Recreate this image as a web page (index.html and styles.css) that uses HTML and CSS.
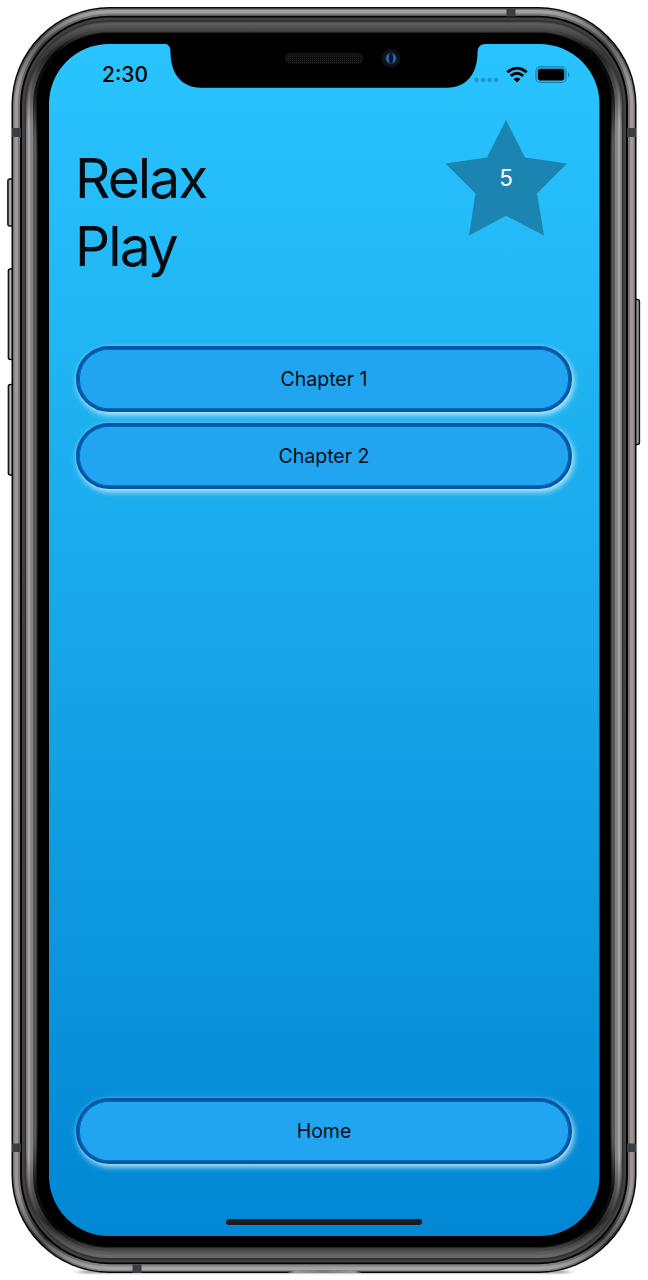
FILE: index.html
```
<!DOCTYPE html>
<html lang="en">
<head>
<meta charset="utf-8">
<title>Relax Play</title>
<link rel="stylesheet" href="styles.css">
</head>
<body>
<div class="device">
  <svg class="frame" viewBox="0 0 648 1280" aria-hidden="true">
    <defs>
      <linearGradient id="rim" x1="0" y1="0" x2="0" y2="1"><stop offset="0" stop-color="#777"/><stop offset=".025" stop-color="#393737"/><stop offset=".06" stop-color="#797474"/><stop offset=".94" stop-color="#777373"/><stop offset=".977" stop-color="#282727"/><stop offset="1" stop-color="#888"/></linearGradient>
      <linearGradient id="rimLight" x1="0" y1="0" x2="0" y2="1"><stop offset="0" stop-color="#aaa6a6"/><stop offset=".025" stop-color="#625f5f"/><stop offset=".06" stop-color="#a09b9b"/><stop offset=".94" stop-color="#9b9696"/><stop offset=".977" stop-color="#555"/><stop offset="1" stop-color="#aaa"/></linearGradient>
      <linearGradient id="p1" x1="0" y1="0" x2="0" y2="1"><stop offset="0" stop-color="#505050"/><stop offset=".04" stop-color="#383838"/><stop offset=".09" stop-color="#777"/><stop offset=".91" stop-color="#777"/><stop offset=".96" stop-color="#383838"/><stop offset="1" stop-color="#656565"/></linearGradient>
      <linearGradient id="p2" x1="0" y1="0" x2="0" y2="1"><stop offset="0" stop-color="#5d5d5d"/><stop offset=".03" stop-color="#2c2c2c"/><stop offset=".08" stop-color="#a5a3a3"/><stop offset=".92" stop-color="#a5a3a3"/><stop offset=".97" stop-color="#2c2c2c"/><stop offset="1" stop-color="#6b6b6b"/></linearGradient>
      <linearGradient id="p3" x1="0" y1="0" x2="0" y2="1"><stop offset="0" stop-color="#555"/><stop offset=".025" stop-color="#222"/><stop offset=".08" stop-color="#858383"/><stop offset=".92" stop-color="#858383"/><stop offset=".975" stop-color="#222"/><stop offset="1" stop-color="#5d5d5d"/></linearGradient>
      <linearGradient id="p4" x1="0" y1="0" x2="0" y2="1"><stop offset="0" stop-color="#4c4c4c"/><stop offset=".02" stop-color="#050505"/><stop offset=".05" stop-color="#111"/><stop offset=".09" stop-color="#5a5858"/><stop offset=".91" stop-color="#5a5858"/><stop offset=".95" stop-color="#111"/><stop offset=".98" stop-color="#050505"/><stop offset="1" stop-color="#4c4c4c"/></linearGradient>
      <linearGradient id="p5" x1="0" y1="0" x2="0" y2="1"><stop offset="0" stop-color="#292929"/><stop offset=".01" stop-color="#000"/><stop offset=".07" stop-color="#000"/><stop offset=".1" stop-color="#292929"/><stop offset=".9" stop-color="#292929"/><stop offset=".93" stop-color="#000"/><stop offset=".99" stop-color="#000"/><stop offset="1" stop-color="#292929"/></linearGradient>
      <linearGradient id="keyL" x1="0" x2="1"><stop offset="0" stop-color="#333"/><stop offset=".35" stop-color="#bbb"/><stop offset="1" stop-color="#777"/></linearGradient>
      <linearGradient id="blue" x1="0" y1="0" x2="0" y2="1"><stop offset="0" stop-color="#29c4ff"/><stop offset=".5" stop-color="#17a6e8"/><stop offset="1" stop-color="#0187d3"/></linearGradient>
      <linearGradient id="foot" x1="0" x2="1"><stop offset="0" stop-color="#333"/><stop offset=".1" stop-color="#999"/><stop offset=".5" stop-color="#777"/><stop offset=".9" stop-color="#999"/><stop offset="1" stop-color="#333"/></linearGradient>
      <radialGradient id="lens"><stop offset="0" stop-color="#081130"/><stop offset=".25" stop-color="#10234d"/><stop offset=".6" stop-color="#3478bd"/><stop offset="1" stop-color="#0f2340"/></radialGradient>
      <pattern id="mesh" width="2" height="2" patternUnits="userSpaceOnUse"><rect width="2" height="2" fill="#101010"/><rect width="1" height="1" fill="#202020"/></pattern>
      <filter id="soft" x="-10%" width="120%" y="-300%" height="700%"><feGaussianBlur stdDeviation="5 .8"/></filter>
    </defs>
    <rect x="80" y="1271" width="488" height="2" fill="#777" filter="url(#soft)"/>
    <!-- side keys -->
    <g fill="url(#keyL)" stroke="#111" stroke-width="1.3">
      <rect x="7.8" y="179" width="6" height="47" rx="2"/>
      <rect x="8.3" y="269" width="6" height="90.500" rx="2"/>
      <rect x="8.3" y="384.500" width="6" height="90.500" rx="2"/>
      <rect x="633" y="299.500" width="6.500" height="145" rx="2"/>
    </g>
    <!-- body, from the outer rim to the glass -->
    <rect x="11.500" y="7" width="625" height="1266" rx="98" fill="#080808"/>
    <rect x="13" y="8.500" width="622" height="1263" rx="96.500" fill="url(#rim)"/>
    <rect x="14.500" y="10" width="619" height="1260" rx="95" fill="url(#rimLight)"/>
    <rect x="18" y="13.500" width="612" height="1253" rx="91.500" fill="url(#rim)"/>
    <rect x="20" y="15.700" width="608" height="1248.600" rx="89.500" fill="#050505"/>
    <rect x="22" y="17.500" width="604" height="1245" rx="87.500" fill="#414040"/>
    <rect x="24.500" y="20" width="599" height="1240" rx="85" fill="#333"/>
    <rect x="26" y="22" width="596" height="1236" rx="83" fill="url(#p1)"/>
    <rect x="27.500" y="23" width="593" height="1234" rx="81.500" fill="url(#p2)"/>
    <rect x="30" y="25.500" width="588" height="1229" rx="79" fill="url(#p3)"/>
    <rect x="33" y="28.500" width="582" height="1223" rx="76" fill="url(#p4)"/>
    <rect x="36.500" y="31.800" width="575" height="1216.400" rx="72" fill="url(#p5)"/>
    <rect x="37.700" y="33" width="572.600" height="1214" rx="71" fill="#000"/>
    <!-- antenna breaks -->
    <path d="M12 128h9v9h-9zM627 128h9v9h-9zM12 1143.500h9v8.500h-9zM627 1143.500h9v8.500h-9zM506.500 8h9v8.500h-9zM132.500 1264.500h9v8.500h-9z" fill="#3b3d43"/>
    <path d="M287 1273q4-2.500 9-2.500h56q6 0 10 2.500z" fill="url(#foot)"/>
    <rect x="49" y="44" width="550.500" height="1192" rx="60" fill="url(#blue)"/>
    <!-- notch, speaker and camera -->
    <path d="M160 43v.8h4c4.500 0 6.500 3 6.500 8C170.500 73 181 87.700 201 87.700h246c20 0 30.500-14.700 30.500-34.900 0-5 2.500-8.800 7.500-8.800h4v-1z" fill="#000"/>
    <rect x="285" y="52.700" width="78" height="11.300" rx="5.650" fill="url(#mesh)"/>
    <circle cx="391" cy="58.300" r="9.500" fill="#101117"/>
    <circle cx="391" cy="58.300" r="5.900" fill="url(#lens)"/>
    <ellipse cx="391" cy="58.300" rx="2" ry="5.300" fill="#0b1230"/>
  </svg>

  <main class="screen">
    <div class="status">
      <span class="time">2:30</span>
      <svg class="indicators" viewBox="0 0 100 20" aria-hidden="true">
        <g fill="#2496c5"><circle cx="6.500" cy="14" r="2.300"/><circle cx="13" cy="14" r="2.300"/><circle cx="19.500" cy="14" r="2.300"/><circle cx="26.200" cy="14" r="2.300"/></g>
        <g fill="none" stroke="#000" stroke-width="2.800"><path d="M37.300 6.200q9.700-8.200 19.400 0"/><path d="M40.800 9.900q6.200-5.400 12.400 0"/></g>
        <path d="M43.500 13.100q3.500-3.200 7 0L47 16.500z" fill="#000"/>
        <rect x="66" y=".8" width="30" height="15.600" rx="4.500" fill="none" stroke="#1580a8" stroke-width="1.200"/>
        <rect x="67.800" y="2.700" width="26.500" height="11.800" rx="2.800" fill="#000"/>
        <path d="M98 6.200q3.200 2.500 0 5z" fill="#1580a8"/>
      </svg>
    </div>
    <header class="heading">
      <h1 class="title">Relax<br>Play</h1>
      <svg class="star" viewBox="0 0 122 116" role="img">
        <path d="M61 0 80 37.500 122 43.600 92 73.500 99 115.500 61 95.700 24 115.500 30.500 73.500.5 43.600 42 37.500z" fill="#1b84b0"/>
        <text class="score" x="61" y="66" text-anchor="middle">5</text>
      </svg>
    </header>
    <nav class="chapters">
      <button class="pill">Chapter 1</button>
      <button class="pill">Chapter 2</button>
    </nav>
    <button class="pill home">Home</button>
    <div class="home-bar"></div>
  </main>
</div>
</body>
</html>
```
FILE: styles.css
```
* { box-sizing: border-box; }
body { margin: 0; background: #fff; font-family: Inter, "Liberation Sans", sans-serif; color: #000; }
.device { position: relative; width: 648px; height: 1280px; padding: 44px 49px; overflow: hidden; }
.frame { position: absolute; inset: 0; width: 648px; height: 1280px; }
.screen { position: relative; display: flex; flex-direction: column; height: 1192px; padding: 0 27px 11px; }
.status { display: flex; justify-content: space-between; align-items: flex-start; height: 76px; padding: 22px 2px 0 0; }
.time { margin-left: 26px; font-size: 21px; line-height: 18px; font-weight: 500; letter-spacing: 0; }
.indicators { width: 100px; height: 20px; }
.heading { display: flex; justify-content: space-between; height: 226px; padding-right: 5px; }
.title { margin: 24px 0 0 -1px; font-size: 55px; line-height: 68px; font-weight: 400; letter-spacing: -1.9px; color: #000b10; }
.star { width: 122px; height: 116px; }
.score { font-size: 22.5px; fill: #fff; }
.chapters { display: flex; flex-direction: column; gap: 11px; }
.pill { display: block; width: 496px; height: 66px; flex: none; padding: 0; border: 3px solid #0055a5; border-radius: 33px; background: #22a5f1; box-shadow: inset 0 0 0 .8px #0055a5, 1.5px 2.5px 6px rgba(220, 244, 255, .95); font: 400 19.5px Inter, "Liberation Sans", sans-serif; letter-spacing: 0; color: #000d18; }
.home { margin-top: auto; margin-bottom: 55px; }
.home-bar { align-self: center; width: 196px; height: 6px; border-radius: 3px; background: #1b1c1e; }
```
